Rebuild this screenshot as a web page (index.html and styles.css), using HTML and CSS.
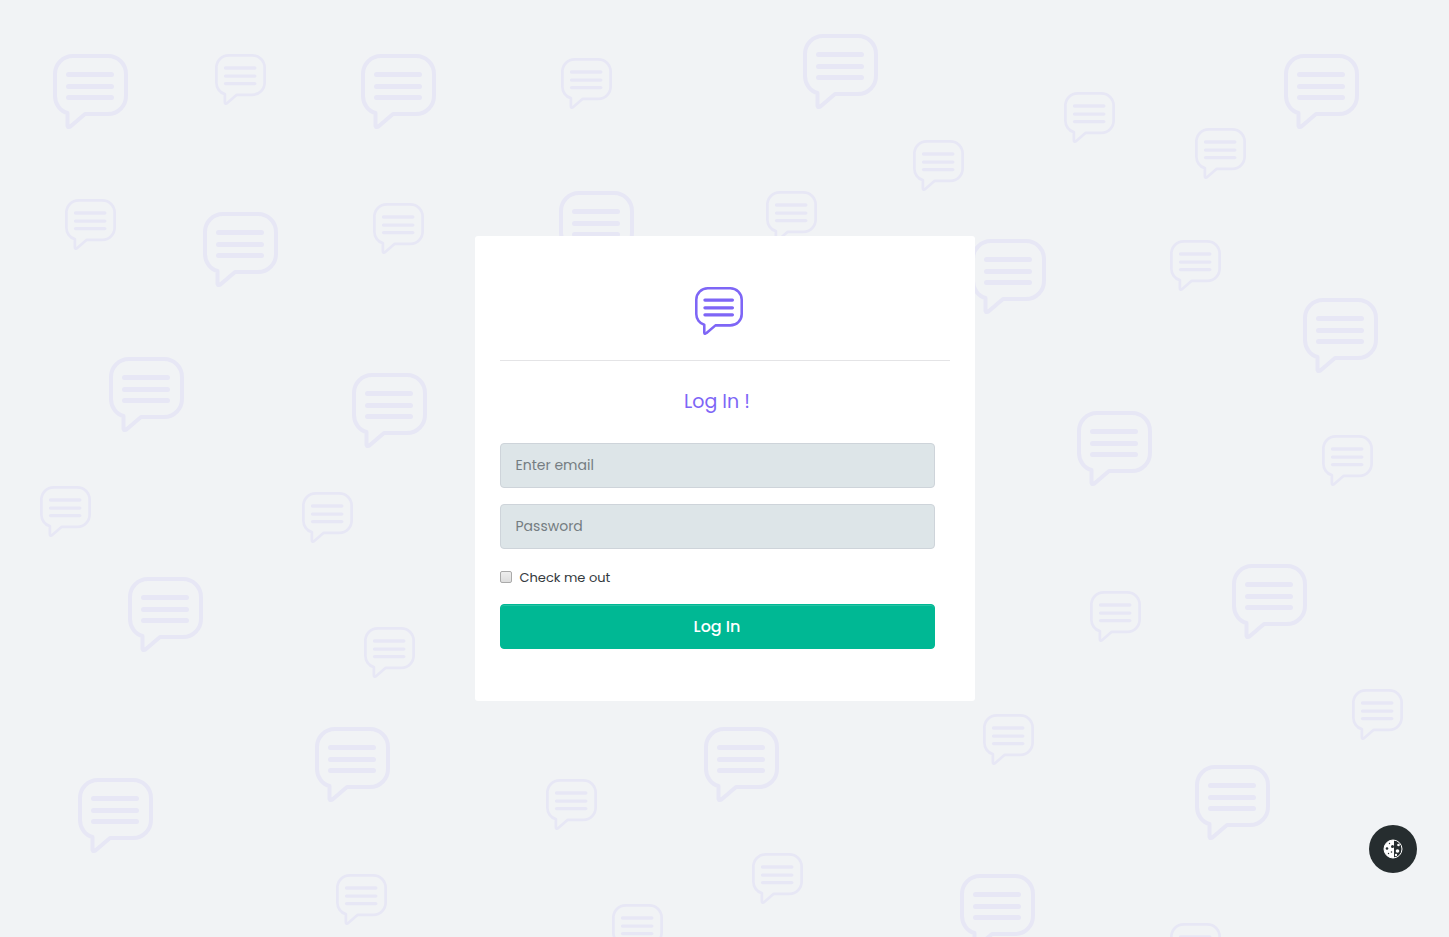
FILE: index.html
```
<!DOCTYPE html>
<html lang="en">

<head>
    <meta charset="UTF-8">
    <meta name="viewport" content="width=device-width, initial-scale=1">
    <title>Log In</title>
    <link rel="stylesheet" href="styles.css">
</head>

<body>
    <!-- Background pattern -->
    <svg class="pattern" viewBox="0 0 1449 937" preserveAspectRatio="xMidYMid slice" aria-hidden="true">
        <defs>
            <symbol id="chat" viewBox="0 0 75 75">
                <path d="M20 2H55C65 2 73 10 73 20V42C73 52 65 60 55 60H32L18 72Q14.500 74.500 14.500 71V59C7 57 2 50 2 42V20C2 10 10 2 20 2Z" stroke-width="4" />
                <path d="M15.500 20.500H58.500M15.500 32.500H58.500M15.500 43.500H58.500" stroke-width="5" />
            </symbol>
            <g id="big"><use href="#chat" width="75" height="75" /></g>
            <g id="small"><use href="#chat" width="51" height="51" /></g>
        </defs>
        <use href="#big" x="53" y="54" />
        <use href="#big" x="361" y="54" />
        <use href="#big" x="803" y="34" />
        <use href="#big" x="1284" y="54" />
        <use href="#big" x="203" y="212" />
        <use href="#big" x="559" y="191" />
        <use href="#big" x="971" y="239" />
        <use href="#big" x="1303" y="298" />
        <use href="#big" x="109" y="357" />
        <use href="#big" x="352" y="373" />
        <use href="#big" x="1077" y="411" />
        <use href="#big" x="128" y="577" />
        <use href="#big" x="1232" y="564" />
        <use href="#big" x="315" y="727" />
        <use href="#big" x="704" y="727" />
        <use href="#big" x="78" y="778" />
        <use href="#big" x="1195" y="765" />
        <use href="#big" x="960" y="874" />
        <use href="#small" x="215" y="54" />
        <use href="#small" x="561" y="58" />
        <use href="#small" x="1064" y="92" />
        <use href="#small" x="1195" y="128" />
        <use href="#small" x="913" y="140" />
        <use href="#small" x="65" y="199" />
        <use href="#small" x="373" y="203" />
        <use href="#small" x="766" y="191" />
        <use href="#small" x="1170" y="240" />
        <use href="#small" x="1322" y="435" />
        <use href="#small" x="40" y="486" />
        <use href="#small" x="302" y="492" />
        <use href="#small" x="1090" y="591" />
        <use href="#small" x="364" y="627" />
        <use href="#small" x="1352" y="689" />
        <use href="#small" x="983" y="714" />
        <use href="#small" x="546" y="779" />
        <use href="#small" x="752" y="853" />
        <use href="#small" x="336" y="874" />
        <use href="#small" x="612" y="904" />
        <use href="#small" x="1170" y="923" />
    </svg>

    <main class="login-card">
        <div class="login-logo">
            <svg class="logo" viewBox="0 0 75 75" role="img" aria-label="Chat">
                <use href="#chat" width="75" height="75" />
            </svg>
        </div>
        <form class="login-form">
            <h1 class="login-title">Log In !</h1>
            <input class="form-control" type="email" placeholder="Enter email" aria-label="Enter email">
            <input class="form-control" type="password" placeholder="Password" aria-label="Password">
            <div class="form-check">
                <input class="check-input" type="checkbox" id="check-me">
                <label for="check-me">Check me out</label>
            </div>
            <button class="btn-login" type="submit">Log In</button>
        </form>
    </main>

    <!-- Theme switch -->
    <button class="theme-toggle" type="button" aria-label="Toggle theme">
        <svg class="theme-icon" viewBox="0 0 20 20">
            <circle class="moon-ring" cx="10" cy="10" r="9" />
            <path class="moon-light" d="M11 1H10A9 9 0 0 0 10 19H11Z" />
            <g class="moon-dark">
                <circle cx="9.500" cy="7.500" r="1.500" />
                <circle cx="4" cy="9.500" r="1.300" />
                <circle cx="8.500" cy="13" r=".8" />
                <circle cx="6.500" cy="4.500" r=".7" />
                <circle cx="5.500" cy="14.500" r=".7" />
            </g>
            <g class="moon-light">
                <circle cx="14.500" cy="12" r="1.800" />
                <circle cx="15.500" cy="6" r="1.300" />
                <circle cx="13" cy="16" r="1.200" />
            </g>
        </svg>
    </button>
</body>

</html>
```
FILE: styles.css
```
* {
    box-sizing: border-box;
}

body {
    margin: 0;
    min-height: 100vh;
    display: flex;
    justify-content: center;
    align-items: center;
    background: #f1f3f5;
    color: #343a40;
    font-family: Poppins, Inter, sans-serif;
    font-size: 14px;
}

.pattern {
    position: fixed;
    top: 0;
    left: 0;
    width: 100%;
    height: 100%;
    fill: none;
    stroke: #e7e7f5;
    stroke-linecap: round;
    stroke-linejoin: round;
}

/* Card */
.login-card {
    position: relative;
    width: 100%;
    max-width: 500px;
    padding: 51px 25px 52px;
    background: #fff;
    border-radius: 3px;
}

.login-logo {
    display: flex;
    justify-content: center;
    padding: 0 12px 25px 0;
    border-bottom: 1px solid #e4e4e6;
}

.logo {
    width: 48px;
    height: 48px;
    fill: none;
    stroke: #7e66f6;
    stroke-linecap: round;
    stroke-linejoin: round;
}

.login-form {
    display: flex;
    flex-direction: column;
    gap: 16px;
    padding: 25px 15px 0 0;
}

.login-title {
    margin: 0 0 9px;
    color: #7e66f6;
    font-size: 19px;
    font-weight: 400;
    line-height: 32px;
    text-align: center;
}

.form-control {
    width: 100%;
    height: 45px;
    padding: 0 15px;
    background: #dde5e8;
    border: 1px solid #ced4da;
    border-radius: 4px;
    color: #495057;
    font: inherit;
}

.form-control::placeholder {
    color: #757d82;
}

.form-check {
    display: flex;
    align-items: center;
    gap: 8px;
    height: 23px;
    font-size: 13px;
}

.form-check label {
    padding-top: 2px;
}

.check-input {
    appearance: none;
    width: 12px;
    height: 12px;
    margin: 0;
    background: linear-gradient(#eee, #ddd);
    border: 1px solid #aaa;
    border-radius: 2px;
}

.check-input:checked {
    background: #00b894;
}

.btn-login {
    height: 45px;
    padding: 0;
    background: #00b894;
    border: 1px solid #00b894;
    border-radius: 4px;
    box-shadow: inset 0 1px 0 rgba(255, 255, 255, 0.15);
    color: #fff;
    font: inherit;
    font-size: 16px;
    font-weight: 500;
    cursor: pointer;
}

/* Floating button */
.theme-toggle {
    position: fixed;
    right: 32px;
    bottom: 64px;
    display: flex;
    justify-content: center;
    align-items: center;
    width: 48px;
    height: 48px;
    padding: 0;
    background: #262d2f;
    border: none;
    border-radius: 50%;
    cursor: pointer;
}

.theme-icon {
    width: 20px;
    height: 20px;
}

.moon-ring {
    fill: none;
    stroke: #fff;
    stroke-width: 1;
}

.moon-light {
    fill: #fff;
}

.moon-dark {
    fill: #262d2f;
}
```
